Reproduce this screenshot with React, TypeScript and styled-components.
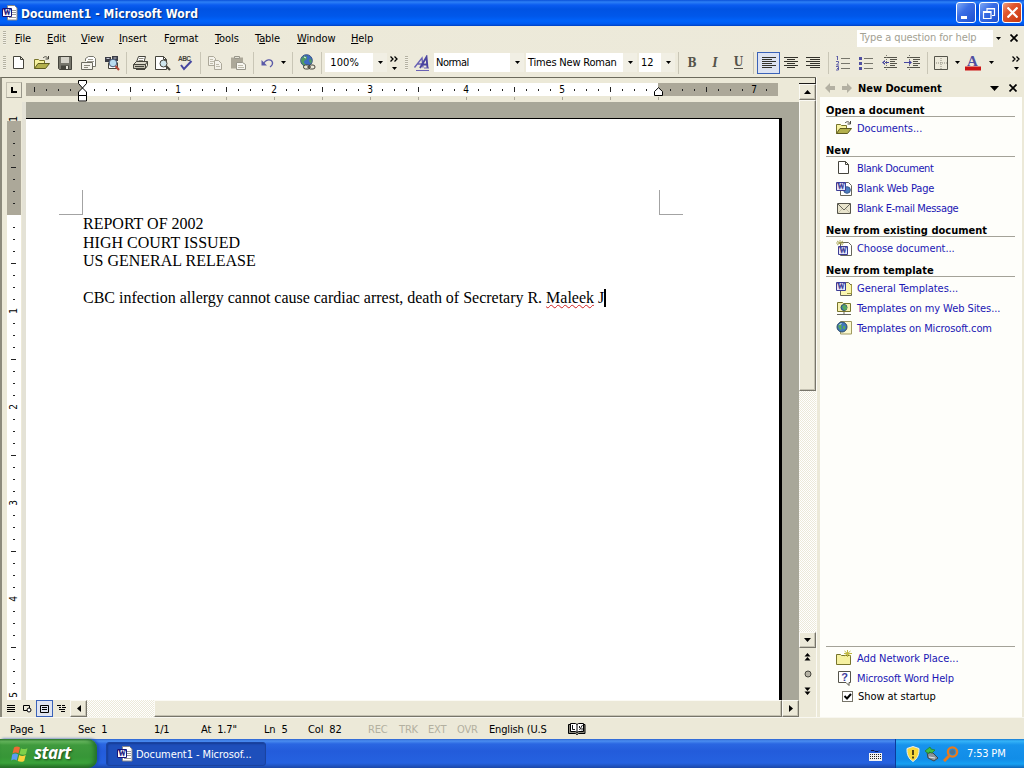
import React from "react";
import styled, { createGlobalStyle, css } from "styled-components";

const face = "#ece9d8";
const Global = createGlobalStyle`
  html, body { margin: 0; padding: 0; }
  body { width: 1024px; height: 768px; overflow: hidden; background: ${face}; }
  * { box-sizing: border-box; }
  svg { display: block; flex: none; }
`;

const Screen = styled.div`
  width: 1024px;
  height: 768px;
  display: flex;
  flex-direction: column;
  overflow: hidden;
  background: ${face};
  color: #000;
  font: 11px "DejaVu Sans Condensed", "DejaVu Sans", sans-serif;
  font-stretch: condensed;
  white-space: pre;
`;

/* ---------- text ---------- */
const Label = styled.span<{ $ls?: number; $color?: string; $bold?: boolean }>`
  letter-spacing: ${(p) => p.$ls ?? -0.2}px;
  color: ${(p) => p.$color ?? "inherit"};
  font-weight: ${(p) => (p.$bold ? 700 : 400)};
`;

/* ---------- title bar ---------- */
const TitleBar = styled.header`
  height: 26px;
  flex: none;
  display: flex;
  align-items: center;
  padding: 0 2px 0 2px;
  background: linear-gradient(#0a50d8 0, #2d80f5 2px, #0b5cf0 5px, #0053e3 9px, #0057ea 16px, #0063fb 21px, #005af0 24px, #0040c0 26px);
`;
const TitleText = styled.h1`
  margin: 1px auto 0 3px;
  font-size: 12px;
  font-weight: 700;
  letter-spacing: 0.1px;
  color: #fff;
  text-shadow: 1px 1px 1px #0a2f7a;
`;
const CaptionButton = styled.div<{ $close?: boolean }>`
  width: 20px;
  height: 21px;
  margin-left: 4px;
  margin-bottom: 1px;
  display: flex;
  align-items: center;
  justify-content: center;
  border: 1px solid #fff;
  border-radius: 3px;
  background: ${(p) =>
    p.$close
      ? "linear-gradient(135deg, #f0a080 0, #e0562f 35%, #c8380f 100%)"
      : "linear-gradient(135deg, #7fa9f5 0, #3a6ee6 40%, #1d50cf 100%)"};
  & + & { margin-left: 3px; }
`;

/* ---------- menu ---------- */
const MenuBar = styled.nav`
  height: 24px;
  flex: none;
  display: flex;
  align-items: center;
  background: linear-gradient(90deg, #ece9d8, #edeadb);
`;
const Grip = styled.div<{ $w: number; $pad: number }>`
  width: ${(p) => p.$w}px;
  height: 14px;
  flex: none;
  padding-left: ${(p) => p.$pad}px;
  &::before {
    content: "";
    display: block;
    width: 3px;
    height: 14px;
    background: repeating-linear-gradient(#b5b2a2 0 1px, #f3f1e6 1px 2px);
  }
`;
const MenuItem = styled.div<{ $w: number }>`
  width: ${(p) => p.$w}px;
  flex: none;
  letter-spacing: -0.1px;
  u { text-underline-offset: 1px; text-decoration-thickness: 1px; }
`;
const AskBox = styled.div`
  width: 136px;
  height: 17px;
  margin-left: auto;
  padding-left: 3px;
  line-height: 16px;
  background: #fff;
  color: #a3a192;
`;

/* ---------- toolbars ---------- */
const ToolBar = styled.div`
  height: 27px;
  flex: none;
  display: flex;
  align-items: center;
  padding-bottom: 2px;
  background: #edeadb;
`;
const Slot = styled.div<{ $w: number; $on?: boolean }>`
  width: ${(p) => p.$w}px;
  height: 22px;
  flex: none;
  display: flex;
  align-items: center;
  justify-content: center;
  ${(p) =>
    p.$on &&
    css`
      background: #dde3f2;
      border: 1px solid #3a62b8;
    `}
`;
const Divider = styled(Slot)`
  &::before {
    content: "";
    width: 1px;
    height: 22px;
    background: #c9c6b6;
  }
`;
const Combo = styled.div<{ $w: number; $gap: number }>`
  width: ${(p) => p.$w}px;
  height: 19px;
  margin-left: ${(p) => p.$gap}px;
  flex: none;
  display: flex;
  align-items: center;
  justify-content: space-between;
  padding-left: 2px;
  background: linear-gradient(90deg, #fff calc(100% - 14px), #f1efe4 calc(100% - 14px));
`;
const ComboArrow = styled.div`
  width: 14px;
  display: flex;
  justify-content: center;
`;
const Glyph = styled.span<{ $italic?: boolean; $under?: boolean }>`
  font: ${(p) => (p.$italic ? "italic" : "normal")} bold 12px/12px "DejaVu Serif Condensed", "DejaVu Serif", serif;
  font-stretch: condensed;
  color: #55534a;
  border-bottom: ${(p) => (p.$under ? "1px solid #55534a" : "0")};
`;

/* ---------- work area ---------- */
const Work = styled.main`
  height: 640px;
  flex: none;
  display: flex;
`;
const Editor = styled.section`
  width: 816px;
  flex: none;
  display: flex;
  flex-direction: column;
  border-top: 1px solid #6c6a5c;
  border-left: 2px solid #8c8a7c;
`;
const EditorBody = styled.div`
  height: 622px;
  flex: none;
  display: flex;
`;
const EditorMain = styled.div`
  width: 797px;
  display: flex;
  flex-direction: column;
`;
const RulerRow = styled.div`
  height: 24px;
  flex: none;
  display: flex;
  padding: 5px 0 0 4px;
`;
const TabSelector = styled.div`
  width: 16px;
  height: 16px;
  margin-top: -1px;
  border: 1px solid #c4c1b2;
  border-right-color: #98968a;
  border-bottom-color: #98968a;
  display: flex;
  align-items: center;
  justify-content: center;
`;
const HRuler = styled.div`
  position: relative;
  width: 752px;
  height: 13px;
  margin-left: 4px;
  padding-left: 2px;
  display: flex;
  background: linear-gradient(90deg, #aca899 56px, #fff 56px 632px, #aca899 632px);
`;
const Cell = styled.div<{ $kind: string; $vertical?: boolean }>`
  ${(p) => (p.$vertical ? "height: 12px; width: 13px;" : "width: 12px; height: 13px;")}
  flex: none;
  display: flex;
  align-items: center;
  justify-content: center;
  font-size: 10px;
  line-height: 12px;
  &::before {
    content: "";
    display: ${(p) => (p.$kind === "dot" || p.$kind === "half" ? "block" : "none")};
    background: #222;
    ${(p) => {
      const len = p.$kind === "half" ? 5 : 2;
      return p.$vertical ? `width:${len}px;height:1px;` : `width:1px;height:${len}px;`;
    }}
  }
`;
const TabStops = styled.div`
  position: absolute;
  left: 104px;
  top: 14px;
  width: 529px;
  height: 3px;
  background: repeating-linear-gradient(90deg, #aca899 0 1px, transparent 1px 48px);
`;
const Marker = styled.svg<{ $x: number; $y: number }>`
  position: absolute;
  left: ${(p) => p.$x}px;
  top: ${(p) => p.$y}px;
`;
const Canvas = styled.div`
  flex: 1;
  display: flex;
  min-height: 0;
`;
const VRulerGutter = styled.div`
  width: 24px;
  padding: 11px 0 0 5px;
  overflow: hidden;
  background: linear-gradient(90deg, ${face} 20px, #e4e2d6 20px);
`;
const VRuler = styled.div`
  width: 14px;
  height: 600px;
  display: flex;
  flex-direction: column;
  background: linear-gradient(transparent 8px, #aca899 8px 102px, #fff 102px);
`;
const Turned = styled.span`
  transform: rotate(-90deg);
`;
const Desk = styled.div`
  flex: 1;
  padding: 16px 17px 0 0;
  background: #a8a799;
`;
const Page = styled.article`
  height: 100%;
  border-top: 1px solid #000;
  border-right: 3px solid #000;
  background: #fff;
`;
const CropMarks = styled.div`
  height: 96px;
  padding: 0 96px 0 33px;
  display: flex;
  align-items: flex-end;
  justify-content: space-between;
`;
const CropMark = styled.div<{ $side: "left" | "right" }>`
  width: 24px;
  height: 25px;
  border-bottom: 1px solid #a3a3a3;
  border-${(p) => (p.$side === "left" ? "right" : "left")}: 1px solid #a3a3a3;
`;
const Paragraph = styled.p<{ $ls: number }>`
  margin: 0 0 0 57px;
  height: 18.6px;
  display: flex;
  font: 16px/18.6px "Liberation Serif", serif;
  letter-spacing: ${(p) => p.$ls}px;
`;
const Misspelled = styled.span`
  text-decoration: underline wavy #d02020 1px;
  text-underline-offset: 1px;
  text-decoration-skip-ink: none;
`;
const Caret = styled.i`
  width: 2px;
  height: 18px;
  background: #000;
`;

/* ---------- scrollbars ---------- */
const dither = css`
  background: repeating-conic-gradient(#fff 0 25%, #ece9d8 0 50%) 0 0 / 2px 2px;
`;
const raised = css`
  background: ${face};
  border: 1px solid #fbfaf4;
  border-right-color: #77756a;
  border-bottom-color: #77756a;
  box-shadow: inset -1px -1px #c5c2b2;
`;
const VScroll = styled.aside`
  width: 17px;
  display: flex;
  flex-direction: column;
`;
const SplitBox = styled.div`
  height: 6px;
  border-right: 1px solid #3c3b35;
  border-bottom: 1px solid #1c1b18;
  background: ${face};
`;
const ScrollButton = styled.div<{ $w: number; $h: number }>`
  width: ${(p) => p.$w}px;
  height: ${(p) => p.$h}px;
  flex: none;
  display: flex;
  align-items: center;
  justify-content: center;
  ${raised}
`;
const VThumb = styled.div`
  height: 291px;
  ${raised}
`;
const VTrack = styled.div`
  height: 241px;
  ${dither}
`;
const Browse = styled.div`
  flex: 1;
  display: flex;
  flex-direction: column;
  align-items: center;
  justify-content: space-between;
  padding: 5px 0 5px;
`;
const HScroll = styled.div`
  height: 17px;
  flex: none;
  display: flex;
  background: ${face};
`;
const ViewButton = styled.div<{ $on?: boolean }>`
  width: 17px;
  height: 17px;
  display: flex;
  align-items: center;
  justify-content: center;
  ${(p) => p.$on && "border: 1px solid #3a62b8; background: #dfe4f1;"}
`;
const HTrack = styled.div`
  width: 67px;
  ${dither}
`;
const HThumb = styled.div`
  width: 628px;
  ${raised}
`;

/* ---------- task pane ---------- */
const Pane = styled.aside`
  width: 208px;
  flex: none;
  display: flex;
  flex-direction: column;
  border-left: 1px solid #fbfaf4;
  padding: 2px 2px 0 3px;
`;
const PaneTitle = styled.div`
  height: 18px;
  flex: none;
  display: flex;
  align-items: center;
  background: ${face};
  padding: 0 5px 0 5px;
`;
const PaneName = styled(Label)`
  margin: 0 auto 0 6px;
`;
const PaneBody = styled.div`
  flex: 1;
  display: flex;
  flex-direction: column;
  padding: 1px 7px 12px 6px;
  background: #fefefa;
`;
const PaneHead = styled.h2`
  margin: 6px 0 1px;
  height: 13px;
  flex: none;
  font-size: 11px;
  line-height: 13px;
  font-weight: 700;
  letter-spacing: 0;
  border-bottom: 1px solid #a4a298;
`;
const PaneRow = styled.div<{ $h?: number }>`
  height: ${(p) => p.$h ?? 20}px;
  flex: none;
  display: flex;
  align-items: center;
  gap: 5px;
  padding-left: 10px;
`;
const PaneFooter = styled.div`
  margin-top: auto;
  padding-top: 1px;
  border-top: 1px solid #a4a298;
`;
const CheckBox = styled.div`
  width: 11px;
  height: 11px;
  margin: 0 0 0 6px;
  border: 1px solid #77756a;
  background: #fff;
`;

/* ---------- status bar ---------- */
const StatusBar = styled.footer`
  height: 22px;
  flex: none;
  display: flex;
  align-items: center;
  padding: 2px 0 0 10px;
  border-top: 1px solid #f8f7f0;
  background: ${face};
`;
const StatusCell = styled.div<{ $w: number; $off?: boolean }>`
  width: ${(p) => p.$w}px;
  flex: none;
  letter-spacing: -0.15px;
  color: ${(p) => (p.$off ? "#b3b0a0" : "#000")};
`;
const BookSlot = styled.div`
  margin-bottom: 3px;
`;

/* ---------- taskbar ---------- */
const TaskBar = styled.footer`
  height: 29px;
  flex: none;
  display: flex;
  background: linear-gradient(#2b62d0 0, #4a8df0 2px, #2a66e2 5px, #235cdb 12px, #2562e0 24px, #1b47a8 29px);
`;
const StartButton = styled.div`
  width: 97px;
  display: flex;
  align-items: center;
  padding-left: 11px;
  gap: 5px;
  border-radius: 0 9px 9px 0;
  background: linear-gradient(#2f7a2f 0, #6cbb62 2px, #3f9a3d 6px, #379637 18px, #3aa23a 24px, #256d25 29px);
  box-shadow: inset -3px 0 4px #23702a, 2px 0 3px #1b4bb5;
`;
const StartText = styled.span`
  margin-bottom: 2px;
  font: italic bold 17px/20px "Open Sans", "Liberation Sans", sans-serif;
  font-stretch: normal;
  letter-spacing: -0.5px;
  color: #fff;
  text-shadow: 1px 1px 2px #1c4d1c;
`;
const TaskButton = styled.div`
  width: 160px;
  height: 24px;
  margin: 3px 0 0 9px;
  padding: 0 0 0 10px;
  display: flex;
  align-items: center;
  gap: 3px;
  border-radius: 3px;
  border: 1px solid #1a43a0;
  background: #1e4fbb;
  box-shadow: inset 1px 1px 2px #153c94;
  color: #fff;
`;
const KeyboardSlot = styled.div`
  margin: 2px 13px 0 auto;
  display: flex;
  align-items: center;
`;
const Tray = styled.div`
  width: 129px;
  display: flex;
  align-items: center;
  padding-left: 10px;
  gap: 4px;
  color: #fff;
  border-left: 1px solid #0a3b9c;
  background: linear-gradient(#1679d2 0, #35b4f8 2px, #1793ec 6px, #118de8 20px, #16a0f2 25px, #0d65b8 29px);
`;
const Clock = styled(Label)`
  margin-left: 4px;
`;

/* ---------- icons ---------- */
type IcoProps = { w?: number; h?: number; children: React.ReactNode };
const Ico = ({ w = 16, h = 16, children }: IcoProps) => (
  <svg width={w} height={h} viewBox={`0 0 ${w} ${h}`} fill="none" stroke="#45443c">
    {children}
  </svg>
);
const Down = ({ w = 5, color = "#000" }: { w?: number; color?: string }) => (
  <Ico w={w} h={Math.ceil(w / 2)}>
    <path d={`M0 0H${w}L${w / 2} ${Math.ceil(w / 2)}Z`} fill={color} stroke="none" />
  </Ico>
);
const More = () => (
  <Ico w={9} h={16}>
    <path d="M.5 1.500l2.500 2.500-2.500 2.500M4.500 1.500L7 4 4.500 6.500" stroke="#000" strokeWidth="1.300" />
    <path d="M2 12h5L4.500 15Z" fill="#000" stroke="none" />
  </Ico>
);
const Cross = ({ s = 8, color = "#000", sw = 1.7 }: { s?: number; color?: string; sw?: number }) => (
  <Ico w={s} h={s}>
    <path d={`M.5 .5L${s - 0.5} ${s - 0.5}M${s - 0.5} .5L.5 ${s - 0.5}`} stroke={color} strokeWidth={sw} />
  </Ico>
);
const NewDoc = () => (
  <Ico>
    <path d="M2.500 1.500h7l3 3v9h-10zM9.500 1.500v3h3" fill="#fff" />
  </Ico>
);
const OpenFolder = () => (
  <Ico>
    <path d="M.5 13.500v-9h4l1 1h5v3" fill="#f7f2a0" stroke="#77742c" />
    <path d="M.5 13.500l3.500-5h11.500l-4 5z" fill="#b3b04c" stroke="#5d5a20" />
    <path d="M9 3c2-2 4-1.500 5 .5M14.500 1v3h-3" />
  </Ico>
);
const Save = () => (
  <Ico>
    <path d="M1.500 1.500h13v13h-12l-1-1z" fill="#77766c" />
    <path d="M4 2h8v6H4z" fill="#d4d2c8" stroke="none" />
    <path d="M4 10.500h8V14H4z" fill="#45443c" stroke="none" />
    <path d="M9 11h2v3H9z" fill="#e8e6dc" stroke="none" />
  </Ico>
);
const MailDoc = () => (
  <Ico w={17}>
    <path d="M5.500 6V3.500l3-2h5l2 2v8h-3" fill="#fff" stroke="#77766c" />
    <path d="M8 4.500h5M7 6.500h7" stroke="#9b998d" />
    <path d="M1.500 7.500h11v7h-11z" fill="#f4f2ea" stroke="#6b6a60" />
    <path d="M4 10.500h6M4 12.500h4" stroke="#8b897d" />
  </Ico>
);
const SearchDoc = () => (
  <Ico>
    <path d="M1 2h6v5H1zM8 1h6v5H8z" fill="#3a3c46" stroke="none" />
    <path d="M2.500 3.500h3M9.500 3h3" stroke="#c9cad6" />
    <path d="M4.500 7.500v6h9v-6" fill="#fff" />
    <circle cx="9" cy="8" r="3.800" fill="#b9dcf0" stroke="#4a5a78" />
    <path d="M11.500 11l3.500 4" stroke="#b5483a" strokeWidth="2" />
  </Ico>
);
const Printer = () => (
  <Ico w={17}>
    <path d="M4.500 7l2-5.500h7L12 7" fill="#fff" />
    <path d="M7 3.500h4.500M6.500 5.500H11" stroke="#8b897d" />
    <path d="M1.500 9.500l3-3h11l-2 3z" fill="#dedbcc" />
    <path d="M1.500 9.500h12v4h-12z" fill="#c4c1b2" />
    <path d="M13.500 13.500l2-3v-4M3 11.500h9M4 14.500h9" />
  </Ico>
);
const Preview = () => (
  <Ico w={17}>
    <path d="M1.500 1.500h8l3 3v10h-11z" fill="#fff" />
    <path d="M9.500 1.500v3h3" />
    <circle cx="9.500" cy="8.500" r="3.500" fill="#cfe6ee" />
    <path d="M12 11l4 4" strokeWidth="2.200" />
  </Ico>
);
const Spell = () => (
  <Ico w={17}>
    <text x="1" y="6" fontSize="6.500" fontWeight="700" fill="#45443c" stroke="none" fontFamily="Liberation Sans" textLength="13">ABC</text>
    <path d="M4 10l3 4 7.500-8" stroke="#4646a0" strokeWidth="2" />
  </Ico>
);
const Copy = () => (
  <Ico>
    <path d="M1.500 1.500h5l2 2v7h-7z" fill="#f4f2ea" stroke="#aca899" />
    <path d="M7.500 5.500h4l3 3v6h-7z" fill="#f4f2ea" stroke="#aca899" />
    <path d="M3 4.500h3M3 6.500h4M9 9.500h3M9 11.500h4M3 8.500h3" stroke="#bfbcac" />
  </Ico>
);
const Paste = () => (
  <Ico>
    <path d="M1 2.500h12v11H1z" fill="#aca899" stroke="none" />
    <path d="M4.500 1.500h5v2h-5z" fill="#e6e4d8" stroke="#98968a" />
    <path d="M6.500 7.500h6l3 2v5h-9z" fill="#f7f6f0" stroke="#98968a" />
    <path d="M8 10.500h5M8 12.500h6" stroke="#bfbcac" />
  </Ico>
);
const Undo = () => (
  <Ico>
    <path d="M4.500 9c2-5 8-5.500 9-1.500.4 2-1 3.500-2.500 4.500" stroke="#5a5aa8" strokeWidth="1.300" />
    <path d="M2.500 5v5.500H8z" fill="#5a5aa8" stroke="none" />
  </Ico>
);
const WebLink = () => (
  <Ico w={17} h={17}>
    <circle cx="7.500" cy="6.500" r="5.800" fill="#3e6bc4" stroke="#35507f" />
    <path d="M4 3c3-2 4-1 4 1S5 6 5 8s3 2 2 4c-3-.5-5-3-5-5.500S3 4 4 3zM11 4l2 3-1 3-2-3z" fill="#4f9a62" stroke="none" />
    <path d="M5 3l2 1" stroke="#e8f4ff" />
    <rect x="4.500" y="11" width="6.500" height="4" rx="2" fill="#ece9d8" />
    <rect x="9.500" y="11" width="6.500" height="4" rx="2" />
    <path d="M8 13h4" />
  </Ico>
);
const Styles = () => (
  <Ico w={17}>
    <path d="M1.500 12.500L9 3l1 9.500M4 9h5.500" stroke="#6a62b4" strokeWidth="1.400" />
    <path d="M7 13L13.500 2l1 11M9 9.500h5" stroke="#4a44a0" strokeWidth="1.900" />
    <path d="M3 15.500h13M11 13h5" stroke="#6a62b4" />
  </Ico>
);
const Lines = ({ rows }: { rows: [number, number][] }) => (
  <Ico>
    {rows.map(([a, b], i) => (
      <path key={i} d={`M${a} ${i * 2 + 2.5}H${b}`} stroke="#33322b" />
    ))}
  </Ico>
);
const left: [number, number][] = [[1, 15], [1, 11], [1, 15], [1, 11], [1, 15], [1, 11]];
const center: [number, number][] = [[1, 15], [4, 12], [1, 15], [4, 12], [1, 15], [4, 12]];
const right: [number, number][] = [[1, 15], [5, 15], [1, 15], [5, 15], [1, 15], [5, 15]];
const Numbering = () => (
  <Ico>
    <path d="M6 3.500h9M6 8.500h9M6 13.500h9" stroke="#77766c" />
    <path d="M2.500 1v4M1.500 1.500h1M1 6.500h2.500v1.500L1.500 10h2.500M1 11.500h2.500v3.500H1M2 13.500h1.500" stroke="#4f4fa0" strokeWidth=".9" />
  </Ico>
);
const Bullets = () => (
  <Ico>
    <path d="M6 3.500h9M6 8.500h9M6 13.500h9" stroke="#77766c" />
    <path d="M1 2h3v3H1zM1 7h3v3H1zM1 12h3v3H1z" fill="#4f4fa0" stroke="none" />
  </Ico>
);
const Indent = ({ out }: { out?: boolean }) => (
  <Ico w={17}>
    <path d="M3 2.500h13M9 4.500h7M9 6.500h5M9 8.500h7M9 10.500h5M3 12.500h13" stroke="#55544a" />
    <path d="M5.500 0v15" strokeDasharray="1 1" stroke="#77766c" />
    <path d={out ? "M4 5L1 7.500 4 10zM3 7h5v1H3z" : "M5 5l3 2.500L5 10zM0 7h5v1H0z"} fill="#4646a0" stroke="none" />
  </Ico>
);
const Borders = () => (
  <Ico>
    <path d="M1.500 1.500h13v13h-13z" stroke="#55544a" />
    <path d="M8 3v11M3 8h11" stroke="#8b897d" strokeDasharray="1 1" />
  </Ico>
);
const FontColor = () => (
  <Ico w={17} h={17}>
    <text x="2" y="11.500" fontSize="15" fontWeight="700" fontFamily="Liberation Serif" fill="#4f4fa0" stroke="none">A</text>
    <path d="M0 12.500h16v4H0z" fill="#cc1515" stroke="none" />
  </Ico>
);
const WordIcon = () => (
  <Ico>
    <path d="M5.500 .5h7l2.500 2.500v12h-9.500z" fill="#fff" stroke="#888" />
    <path d="M10 5.500h4M10 7.500h4M10 9.500h4M7 12.500h7" stroke="#999" />
    <path d="M.5 3.500h9v8h-9z" fill="#fff" stroke="#15157a" />
    <text x="1.200" y="10.300" fontSize="8.500" textLength="7.600" lengthAdjust="spacingAndGlyphs" fontWeight="700" fontFamily="Liberation Serif" fill="#15157a" stroke="#15157a" strokeWidth=".3">W</text>
  </Ico>
);
const WordDoc = ({ kind }: { kind: "web" | "choose" | "general" }) => (
  <Ico>
    <path d="M4.500 2.500h8l3 3v10h-11z" fill={kind === "general" ? "#fbf7b0" : "#fff"} stroke="#66655b" />
    {kind === "web" && <circle cx="11" cy="10" r="3.300" fill="#4a7cc0" stroke="#3a5a8a" />}
    {kind === "choose" && <path d="M4 0v4M1 1l6 4M7 1L1 5M0 3h8" stroke="#a09a40" strokeWidth=".8" />}
    {kind === "general" && <path d="M11 13.500h4.500V4" stroke="#a09a40" />}
    <path d={kind === "choose" ? "M2.500 6.500h9v8h-9z" : "M.5 2.500h9v8h-9z"} fill="#e6e6fa" stroke="#3c3c94" />
    <text x={kind === "choose" ? 3.3 : 1.3} y={kind === "choose" ? 13.2 : 9.2} fontSize="8" textLength="7.500" lengthAdjust="spacingAndGlyphs" fontWeight="700" fontFamily="Liberation Serif" fill="#3c3c94" stroke="#3c3c94" strokeWidth=".3">W</text>
  </Ico>
);
const Envelope = () => (
  <Ico>
    <path d="M1.500 3.500h13v10h-13z" fill="#e8e4cc" stroke="#55544a" />
    <path d="M2 4l6 6 6-6" stroke="#66655b" />
    <path d="M2 13l4-4M14 13l-4-4" stroke="#c4c0a8" />
  </Ico>
);
const Globe = ({ x, y, r }: { x: number; y: number; r: number }) => (
  <g>
    <circle cx={x} cy={y} r={r} fill="#3f78b8" stroke="#2c4a66" />
    <path d={`M${x - r + 1} ${y - 1}l2-2 2 1-1 2 1 2-2 1zM${x + 1} ${y - 1}l2 0 0 3-2 0z`} fill="#58a85c" stroke="none" />
  </g>
);
const WebFolder = () => (
  <Ico>
    <path d="M1.500 11.500v-9h5l1 1h7v8z" fill="#f6f1b0" stroke="#77742c" />
    <Globe x={8} y={7.500} r={3} />
    <path d="M8 12v2M1 14.500h14" stroke="#66655b" />
  </Ico>
);
const MsGlobe = () => (
  <Ico>
    <path d="M4.500 1.500h11v12.500h-11z" fill="#fbf9d0" stroke="#a09a60" />
    <Globe x={6} y={7} r={5} />
    <path d="M3.500 4.500l2-1" stroke="#e8f4ff" />
  </Ico>
);
const NetFolder = () => (
  <Ico>
    <path d="M.5 14.500v-10h4l1 1h9v9z" fill="#f6f1a0" stroke="#77742c" />
    <path d="M11.500 0v7M8.500 1l6 5M14.500 1l-6 5M8 3.500h8" stroke="#c0b840" />
  </Ico>
);
const HelpIcon = () => (
  <Ico>
    <path d="M2.500 1.500h12v11h-1.500v3l-3-3h-7.500z" fill="#fff" stroke="#55544a" />
    <text x="5.300" y="11" fontSize="11" fontWeight="700" fontFamily="Liberation Sans" fill="#3c3ca0" stroke="none">?</text>
  </Ico>
);
const PaneArrow = ({ flip }: { flip?: boolean }) => (
  <Ico w={10} h={10}>
    <path d={flip ? "M10 5L5 0v3H0v4h5v3z" : "M0 5l5-5v3h5v4H5v3z"} fill="#b3b0a2" stroke="none" />
  </Ico>
);
const Flag = () => (
  <Ico w={18} h={18}>
    <g stroke="none">
      <path d="M3 2.500c2-1.500 4-1.500 6 0L7.500 8.500c-2-1.500-3.500-1.500-6 0z" fill="#ee6a35" />
      <path d="M10 3.200c2 1.200 4 1.200 6.500 0L15 9c-2.200 1.200-4.500 1-6.500 0z" fill="#7fd04a" />
      <path d="M1.200 9.500c2-1.300 4-1.300 6 0L5.700 15.500c-2-1.500-3.500-1.500-5.500 0z" fill="#5a9cf4" />
      <path d="M8.200 10c2 1.200 4 1.200 6.500 0l-1.500 6c-2.200 1.200-4.500 1-6.500 0z" fill="#fbd23c" />
    </g>
  </Ico>
);
const Keyboard = () => (
  <Ico w={13} h={12}>
    <path d="M2 1.500h3l1 1h3l1-1" stroke="#0a1a50" />
    <path d="M0 4h13v8H0z" fill="#f2f2f2" stroke="none" />
    <path d="M1 5.500h11M1 7.500h11M1 9.500h11" stroke="#222" strokeDasharray="1 1" />
  </Ico>
);
const Shield = () => (
  <Ico w={14} h={16}>
    <path d="M7 .5l6 2c.3 6-1.500 10-6 13C2.500 12.500.7 8.500 1 2.500z" fill="#f8d93c" stroke="#e9eef5" />
    <path d="M7 4v5M7 10.500v2" stroke="#3c3210" strokeWidth="1.800" />
  </Ico>
);
const Eject = () => (
  <Ico w={15}>
    <path d="M3 6l6 1 5 5-4 3-6-3z" fill="#8c9499" stroke="#3c464c" />
    <path d="M5 11l6 1" stroke="#e4e8ea" />
    <path d="M1 5l5-4 1 2 4 1-3 3-3-1v2z" fill="#3fc043" stroke="#1f7a28" strokeWidth=".7" />
  </Ico>
);
const Magnifier = () => (
  <Ico w={16}>
    <circle cx="9.500" cy="6" r="4.600" stroke="#e87a1c" strokeWidth="2.400" />
    <path d="M6 10l-5 5" stroke="#e87a1c" strokeWidth="3" />
    <circle cx="9.500" cy="6" r="2.500" fill="#4f7390" stroke="none" />
  </Ico>
);
const Book = () => (
  <Ico w={18} h={13}>
    <path d="M.5 2.500h2M.5 2.500v9h7l1 1h1l1-1h6.500v-9h-1" fill="#8c8a7e" stroke="#000" />
    <path d="M2.500 9.500v-8h5l1.500 1 1.500-1h5v8h-5l-1.500 1-1.500-1z" fill="#fff" stroke="#000" />
    <path d="M9 2.500v8" stroke="#000" />
    <path d="M4.500 3v4.500h2.500M11.500 8l3-5M11.500 4v2M14 6v2.500" stroke="#000" strokeWidth=".9" />
  </Ico>
);

/* ---------- data ---------- */
const menus: [string, string, string, number][] = [
  ["", "F", "ile", 32], ["", "E", "dit", 34], ["", "V", "iew", 38], ["", "I", "nsert", 45], ["F", "o", "rmat", 51],
  ["", "T", "ools", 40], ["T", "a", "ble", 42], ["", "W", "indow", 54], ["", "H", "elp", 40],
];
const kindAt = (eighth: number) => (eighth % 8 === 0 ? "num" : eighth % 4 === 0 ? "half" : "dot");
const hCells = Array.from({ length: 62 }, (_, i) => i - 4);
const vCells = Array.from({ length: 50 }, (_, i) => i - 8);
const link = "#1a16b4";

export default function App() {
  return (
    <Screen>
      <Global />
      <TitleBar>
        <WordIcon />
        <TitleText>Document1 - Microsoft Word</TitleText>
        <CaptionButton>
          <Ico w={14} h={14}><path d="M2 10h6v3H2z" fill="#fff" stroke="none" /></Ico>
        </CaptionButton>
        <CaptionButton>
          <Ico w={14} h={14}>
            <path d="M5 5.500V2.500h7.500v7H10M5 3h7M1.500 5.500h7.500v7H1.500zM1.500 6.500H9" stroke="#fff" strokeWidth="1.200" />
          </Ico>
        </CaptionButton>
        <CaptionButton $close><Cross s={11} color="#fff" sw={2.2} /></CaptionButton>
      </TitleBar>

      <MenuBar>
        <Grip $w={15} $pad={3} />
        {menus.map(([a, u, b, w]) => (
          <MenuItem key={a + u + b} $w={w}>{a}<u>{u}</u>{b}</MenuItem>
        ))}
        <AskBox><Label $ls={-0.1}>Type a question for help</Label></AskBox>
        <Slot $w={11}><Down /></Slot>
        <Slot $w={20}><Cross /></Slot>
      </MenuBar>

      <ToolBar>
        <Grip $w={7} $pad={3} />
        <Slot $w={23}><NewDoc /></Slot>
        <Slot $w={23}><OpenFolder /></Slot>
        <Slot $w={23}><Save /></Slot>
        <Slot $w={24}><MailDoc /></Slot>
        <Slot $w={23}><SearchDoc /></Slot>
        <Divider $w={6} />
        <Slot $w={22}><Printer /></Slot>
        <Slot $w={22}><Preview /></Slot>
        <Slot $w={24}><Spell /></Slot>
        <Divider $w={7} />
        <Slot $w={22}><Copy /></Slot>
        <Slot $w={24}><Paste /></Slot>
        <Divider $w={6} />
        <Slot $w={22}><Undo /></Slot>
        <Slot $w={10}><Down /></Slot>
        <Divider $w={9} />
        <Slot $w={20}><WebLink /></Slot>
        <Divider $w={8} />
        <Combo $w={62} $gap={0}><Label $ls={0.1}> 100%</Label><ComboArrow><Down /></ComboArrow></Combo>
        <Slot $w={14}><More /></Slot>
        <Grip $w={10} $pad={4} />
        <Slot $w={20}><Styles /></Slot>
        <Combo $w={90} $gap={3}><Label $ls={-0.5}>Normal</Label><ComboArrow><Down /></ComboArrow></Combo>
        <Combo $w={111} $gap={2}><Label>Times New Roman</Label><ComboArrow><Down /></ComboArrow></Combo>
        <Combo $w={36} $gap={2}>12<ComboArrow><Down /></ComboArrow></Combo>
        <Divider $w={6} />
        <Slot $w={22}><Glyph>B</Glyph></Slot>
        <Slot $w={24}><Glyph $italic>I</Glyph></Slot>
        <Slot $w={23}><Glyph $under>U</Glyph></Slot>
        <Divider $w={7} />
        <Slot $w={23} $on><Lines rows={left} /></Slot>
        <Slot $w={21}><Lines rows={center} /></Slot>
        <Slot $w={24}><Lines rows={right} /></Slot>
        <Divider $w={7} />
        <Slot $w={22}><Numbering /></Slot>
        <Slot $w={23}><Bullets /></Slot>
        <Slot $w={24}><Indent out /></Slot>
        <Slot $w={23}><Indent /></Slot>
        <Divider $w={6} />
        <Slot $w={22}><Borders /></Slot>
        <Slot $w={10}><Down /></Slot>
        <Slot $w={23}><FontColor /></Slot>
        <Slot $w={12}><Down /></Slot>
        <Slot $w={39}><More /></Slot>
      </ToolBar>

      <Work>
        <Editor>
          <EditorBody>
            <EditorMain>
              <RulerRow>
                <TabSelector>
                  <Ico w={6} h={6}><path d="M1 0v5h5" stroke="#000" strokeWidth="2" /></Ico>
                </TabSelector>
                <HRuler>
                  {hCells.map((n) => {
                    const hidden = n === 0 || n === 48;
                    const kind = hidden ? "none" : kindAt(n);
                    return <Cell key={n} $kind={kind}>{kind === "num" ? n / 8 : null}</Cell>;
                  })}
                  <TabStops />
                  <Marker $x={52} $y={-3} width="9" height="22" viewBox="0 0 9 22" fill="#fff" stroke="#000">
                    <path d="M.5 .5h8v3L4.500 8 .5 3.500zM4.500 8l4 4v3.500h-8V12zM.5 15.500h8v5.500h-8z" />
                  </Marker>
                  <Marker $x={628} $y={4} width="10" height="10" viewBox="0 0 10 10" fill="#fff" stroke="#000">
                    <path d="M.5 8.500v-4L4.500 .7l4 3.800v4z" />
                  </Marker>
                </HRuler>
              </RulerRow>
              <Canvas>
                <VRulerGutter>
                  <VRuler>
                    {vCells.map((n) => {
                      const kind = n === 0 ? "none" : kindAt(n);
                      return (
                        <Cell key={n} $kind={kind} $vertical>
                          {kind === "num" ? <Turned>{Math.abs(n / 8)}</Turned> : null}
                        </Cell>
                      );
                    })}
                  </VRuler>
                </VRulerGutter>
                <Desk>
                  <Page>
                    <CropMarks>
                      <CropMark $side="left" />
                      <CropMark $side="right" />
                    </CropMarks>
                    <Paragraph $ls={0}>REPORT OF 2002</Paragraph>
                    <Paragraph $ls={0}>HIGH COURT ISSUED</Paragraph>
                    <Paragraph $ls={0}>US GENERAL RELEASE</Paragraph>
                    <Paragraph $ls={0}> </Paragraph>
                    <Paragraph $ls={-0.012}>
                      CBC infection allergy cannot cause cardiac arrest, death of Secretary R. <Misspelled>Maleek</Misspelled> J<Caret />
                    </Paragraph>
                  </Page>
                </Desk>
              </Canvas>
            </EditorMain>
            <VScroll>
              <SplitBox />
              <ScrollButton $w={17} $h={16}><Ico w={7} h={4}><path d="M3.500 0L7 4H0z" fill="#000" stroke="none" /></Ico></ScrollButton>
              <VThumb />
              <VTrack />
              <ScrollButton $w={17} $h={16}><Down w={7} /></ScrollButton>
              <Browse>
                <Ico w={7} h={8}><path d="M3.500 0L6.500 3.500H.5zM3.500 4l3 3.500h-6z" fill="#000" stroke="none" /></Ico>
                <Ico w={8} h={8}><circle cx="4" cy="4" r="3" fill="#b5b2a4" /></Ico>
                <Ico w={7} h={8}><path d="M3.500 4L6.500 .5H.5zM3.500 8l3-3.500h-6z" fill="#000" stroke="none" /></Ico>
              </Browse>
            </VScroll>
          </EditorBody>
          <HScroll>
            <ViewButton><Ico w={8} h={8}><path d="M0 .5h8M0 2.500h8M0 4.500h8M0 6.500h8" stroke="#000" /></Ico></ViewButton>
            <ViewButton><Ico w={9} h={8}><path d="M.5 .5h6v5h-6z" stroke="#000" /><circle cx="6" cy="5" r="2" fill="#fff" stroke="#000" /></Ico></ViewButton>
            <ViewButton $on><Ico w={9} h={8}><path d="M.5 .5h8v7h-8zM2 2.500h5M2 4.500h5" stroke="#000" /></Ico></ViewButton>
            <ViewButton><Ico w={9} h={8}><path d="M0 .5h4M5 .5h3M2 2.500h2M5 2.500h4M2 4.500h6M4 6.500h4" stroke="#000" /></Ico></ViewButton>
            <ScrollButton $w={17} $h={17}><Ico w={4} h={7}><path d="M0 3.500L4 0v7z" fill="#000" stroke="none" /></Ico></ScrollButton>
            <HTrack />
            <HThumb />
            <ScrollButton $w={17} $h={17}><Ico w={4} h={7}><path d="M4 3.500L0 0v7z" fill="#000" stroke="none" /></Ico></ScrollButton>
          </HScroll>
        </Editor>

        <Pane>
          <PaneTitle>
            <PaneArrow />
            <Slot $w={7} />
            <PaneArrow flip />
            <PaneName $bold $ls={-0.05}>New Document</PaneName>
            <Down w={9} />
            <Slot $w={10} />
            <Cross />
          </PaneTitle>
          <PaneBody>
            <PaneHead>Open a document</PaneHead>
            <PaneRow><OpenFolder /><Label $ls={-0.05} $color={link}>Documents...</Label></PaneRow>
            <PaneHead>New</PaneHead>
            <PaneRow><NewDoc /><Label $ls={-0.4} $color={link}>Blank Document</Label></PaneRow>
            <PaneRow><WordDoc kind="web" /><Label $ls={-0.15} $color={link}>Blank Web Page</Label></PaneRow>
            <PaneRow><Envelope /><Label $ls={-0.35} $color={link}>Blank E-mail Message</Label></PaneRow>
            <PaneHead>New from existing document</PaneHead>
            <PaneRow><WordDoc kind="choose" /><Label $ls={-0.08} $color={link}>Choose document...</Label></PaneRow>
            <PaneHead>New from template</PaneHead>
            <PaneRow><WordDoc kind="general" /><Label $ls={-0.03} $color={link}>General Templates...</Label></PaneRow>
            <PaneRow><WebFolder /><Label $ls={-0.08} $color={link}>Templates on my Web Sites...</Label></PaneRow>
            <PaneRow><MsGlobe /><Label $ls={-0.12} $color={link}>Templates on Microsoft.com</Label></PaneRow>
            <PaneFooter>
              <PaneRow><NetFolder /><Label $ls={-0.05} $color={link}>Add Network Place...</Label></PaneRow>
              <PaneRow><HelpIcon /><Label $ls={-0.12} $color={link}>Microsoft Word Help</Label></PaneRow>
              <PaneRow $h={17}>
                <CheckBox><Ico w={9} h={9}><path d="M1.500 4L4 6.500 8 2" stroke="#000" strokeWidth="2" /></Ico></CheckBox>
                <Label $ls={-0.05}>Show at startup</Label>
              </PaneRow>
            </PaneFooter>
          </PaneBody>
        </Pane>
      </Work>

      <StatusBar>
        <StatusCell $w={68}>Page  1</StatusCell>
        <StatusCell $w={76}>Sec  1</StatusCell>
        <StatusCell $w={47}>1/1</StatusCell>
        <StatusCell $w={63}>At  1.7"</StatusCell>
        <StatusCell $w={44}>Ln  5</StatusCell>
        <StatusCell $w={60}>Col  82</StatusCell>
        <StatusCell $w={31} $off>REC</StatusCell>
        <StatusCell $w={29} $off>TRK</StatusCell>
        <StatusCell $w={29} $off>EXT</StatusCell>
        <StatusCell $w={32} $off>OVR</StatusCell>
        <StatusCell $w={79}>English (U.S</StatusCell>
        <BookSlot><Book /></BookSlot>
      </StatusBar>

      <TaskBar>
        <StartButton><Flag /><StartText>start</StartText></StartButton>
        <TaskButton><WordIcon /><Label $ls={-0.08}>Document1 - Microsof...</Label></TaskButton>
        <KeyboardSlot><Keyboard /></KeyboardSlot>
        <Tray><Shield /><Eject /><Magnifier /><Clock>7:53 PM</Clock></Tray>
      </TaskBar>
    </Screen>
  );
}
